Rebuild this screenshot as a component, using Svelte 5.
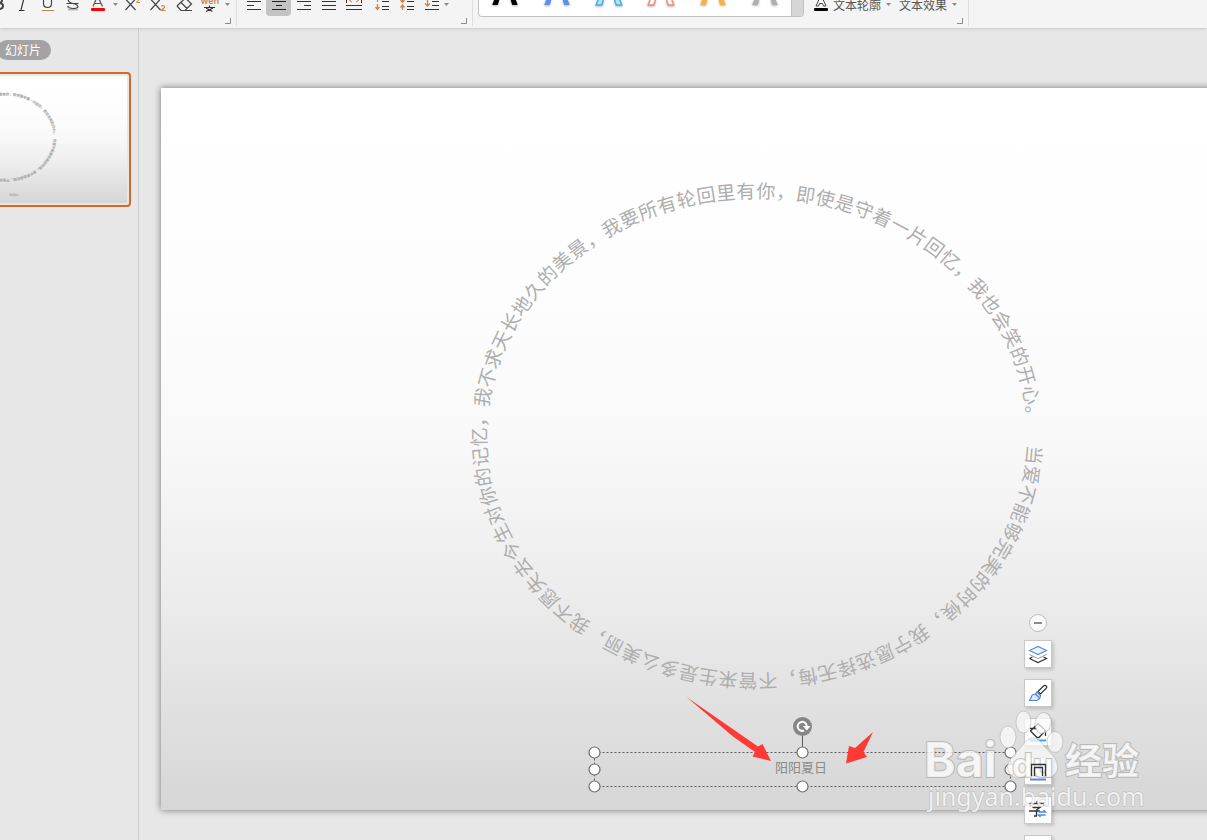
<script>
  const verse =
    '当爱不能够完美的时候，我宁愿选择无悔，不管来生是多么美丽，我不愿失去今生对你的记忆，我不求天长地久的美景，我要所有轮回里有你，即使是守着一片回忆，我也会笑的开心。';

  // Glyph centres walk clockwise round an ellipse at equal arc steps.
  function layoutOnEllipse(text, { cx, cy, rx, ry, size, step, start }) {
    const xs = [];
    const ys = [];
    const angles = [];
    const delta = 0.0001;
    let t = start;
    for (let i = 0; i < text.length; i++) {
      const px = cx + rx * Math.cos(t);
      const py = cy + ry * Math.sin(t);
      const a = Math.atan2(ry * Math.cos(t), -rx * Math.sin(t));
      const back = size / 2;
      const down = size * 0.38;
      xs.push((px - back * Math.cos(a) - down * Math.sin(a)).toFixed(2));
      ys.push((py - back * Math.sin(a) + down * Math.cos(a)).toFixed(2));
      angles.push(((a * 180) / Math.PI).toFixed(2));
      let run = 0;
      while (run < step) {
        run += Math.hypot(rx * Math.sin(t), ry * Math.cos(t)) * delta;
        t += delta;
      }
    }
    return { x: xs.join(' '), y: ys.join(' '), rotate: angles.join(' ') };
  }

  const ring = layoutOnEllipse(verse, {
    cx: 596, cy: 348, rx: 278, ry: 245, size: 19, step: 20.04, start: 0.078
  });

  const presets = [
    { fill: '#000000', stroke: 'none' },
    { fill: '#5b92e5', stroke: 'none' },
    { fill: '#b5e2f5', stroke: '#45b1e1' },
    { fill: '#ffffff', stroke: '#ef8f78' },
    { fill: '#f6b04e', stroke: 'none' },
    { fill: '#b0b0b0', stroke: 'none' }
  ];

  const handles = [
    [433, 664], [641, 664], [849, 664], [433, 681], [849, 681],
    [433, 698], [641, 698], [849, 698]
  ];
</script>

{#snippet caret(label)}
  <button class="caret" aria-label={label}>
    <svg width="7" height="28" viewBox="0 0 7 28"><path d="M1 3h5L3.500 6z" fill="#8a8a8a" /></svg>
  </button>
{/snippet}

{#snippet corner(label)}
  <button class="corner" aria-label={label}>
    <svg width="6" height="6" viewBox="0 0 6 6"><path d="M5.500 0v5.500H0" fill="none" stroke="#8a8a8a" /></svg>
  </button>
{/snippet}

{#snippet slideText()}
  <text class="ring" x={ring.x} y={ring.y} rotate={ring.rotate}>{verse}</text>
  <text class="name" x="640" y="684" text-anchor="middle">阳阳夏日</text>
{/snippet}

<div class="app">
  <header class="ribbon">
    <section class="group font-group">
      <button class="tool cut" aria-label="加粗">
        <svg width="10" height="28" viewBox="0 0 10 28"><path d="M-4-3H0Q3-3 3 0T0 3M-4 3H0Q4 3 4 6T0 9H-4" transform="translate(-1 0)" fill="none" stroke="#444" stroke-width="2" /></svg>
      </button>
      <button class="tool" aria-label="倾斜">
        <svg width="25" height="28" viewBox="0 0 25 28"><path d="M14.500-4L11 10M9 10.500h5.500" fill="none" stroke="#333" stroke-width="1.200" /></svg>
      </button>
      <button class="tool" aria-label="下划线">
        <svg width="25" height="28" viewBox="0 0 25 28"><path d="M8.500-4V3.500Q8.500 7.500 12.500 7.500T16.500 3.500V-4" fill="none" stroke="#444" stroke-width="1.200" /><path d="M7 10.500h12" stroke="#cf8151" /></svg>
      </button>
      <button class="tool" aria-label="删除线">
        <svg width="25" height="28" viewBox="0 0 25 28"><path d="M8 9.500h10" stroke="#b8b8b8" stroke-width="2" /><path d="M16.500-1Q15-4 12-4Q8-4 8-1Q8 2.500 13 3.500Q18 4.500 18 7Q17 8.500 13 8.500Q9 8.500 7.500 6M6.500 3.500h12" fill="none" stroke="#444" stroke-width="1.200" /></svg>
      </button>
      <button class="tool" aria-label="字体颜色">
        <svg width="25" height="28" viewBox="0 0 25 28"><path d="M8 6.500L12.500-4L17.500 6.500M9 3.500h7" fill="none" stroke="#555" stroke-width="1.200" /><rect x="6" y="8" width="14" height="3" rx="1" fill="#f00" /></svg>
      </button>
      {@render caret('更多字体颜色')}
      <button class="tool" aria-label="上标">
        <svg width="25" height="28" viewBox="0 0 25 28"><path d="M5.500-1L15.500 10M15.500-1L5.500 10" fill="none" stroke="#444" stroke-width="1.200" /><path d="M16.500-1Q19.500-3 19.500-1L16.500 2.500H20" fill="none" stroke="#cf8151" /></svg>
      </button>
      <button class="tool" aria-label="下标">
        <svg width="25" height="28" viewBox="0 0 25 28"><path d="M5.500-1L15.500 10M15.500-1L5.500 10" fill="none" stroke="#444" stroke-width="1.200" /><path d="M16.500 6.500Q17 5.500 18 5.500Q20.500 6 19 8L16.500 10.500H20.500" fill="none" stroke="#cf8151" stroke-width="1.200" /></svg>
      </button>
      <button class="tool wide" aria-label="清除格式">
        <svg width="27" height="28" viewBox="0 0 27 28"><path d="M15.500-2L21.500 4L15 10.500H11L7.500 6.500Q7 6 7.500 5.500ZM11 2.500L17 8.500M11 10.500H22" fill="none" stroke="#444" stroke-width="1.200" /></svg>
      </button>
      <button class="tool" aria-label="拼音指南">
        <svg width="25" height="28" viewBox="0 0 25 28"><text class="pinyin" x="13" y="4" text-anchor="middle">wen</text><path d="M7 7.500H18M12.500 5.500v2M9 8L15.500 11.500M16 8L9 11.500" fill="none" stroke="#333" stroke-width="1.200" /></svg>
      </button>
      {@render caret('更多拼音')}
      {@render corner('字体设置')}
    </section>

    <section class="group para-group">
      <button class="tool" aria-label="左对齐">
        <svg width="25" height="28" viewBox="0 0 25 28"><path d="M6 1.500H20M6 5.500H13M6 9.500H20" stroke="#333" /></svg>
      </button>
      <button class="tool active" aria-label="居中对齐">
        <svg width="25" height="28" viewBox="0 0 25 28"><path d="M6 1.500H20M10 5.500H16M6 9.500H20" stroke="#222" /></svg>
      </button>
      <button class="tool" aria-label="右对齐">
        <svg width="25" height="28" viewBox="0 0 25 28"><path d="M6 1.500H20M13 5.500H20M6 9.500H20" stroke="#333" /></svg>
      </button>
      <button class="tool" aria-label="两端对齐">
        <svg width="25" height="28" viewBox="0 0 25 28"><path d="M6 1.500H20M6 5.500H20M6 9.500H20" stroke="#333" /></svg>
      </button>
      <button class="tool" aria-label="分散对齐">
        <svg width="25" height="28" viewBox="0 0 25 28"><path d="M5.500-3V3M20.500-3V3M5 5.500H21M5 9.500H21" fill="none" stroke="#333" /><path d="M11-1L8.500 .5L11 2M15-1L17.500 .5L15 2" fill="none" stroke="#cf8151" /></svg>
      </button>
      <button class="tool spaced" aria-label="行距">
        <svg width="25" height="28" viewBox="0 0 25 28"><path d="M13 1.500H20M13 6.500H20M13 9.500H20" stroke="#333" /><path d="M8.500-2V2M8.500 4V9M6.500 7L8.500 9.500L10.500 7" fill="none" stroke="#cf8151" stroke-width="1.300" /></svg>
      </button>
      <button class="tool" aria-label="段落间距">
        <svg width="25" height="28" viewBox="0 0 25 28"><path d="M13 1.500H20M13 6.500H20M13 9.500H20" stroke="#333" /><path d="M8.500-2V2M6.500 0L8.500 2.500L10.500 0M8.500 10V5M6.500 7.500L8.500 5L10.500 7.500" fill="none" stroke="#cf8151" stroke-width="1.300" /></svg>
      </button>
      <button class="tool narrow" aria-label="行间距">
        <svg width="22" height="28" viewBox="0 0 22 28"><path d="M13 1.500H20M13 5.500H20M6 9.500H20" stroke="#333" /><path d="M8.500-3V6M6 3.500L8.500 6L11 3.500" fill="none" stroke="#cf8151" stroke-width="1.300" /></svg>
      </button>
      {@render caret('更多行距')}
      {@render corner('段落设置')}
    </section>

    <section class="group art-group">
      <div class="gallery">
        {#each presets as preset, i}
          <button class="preset" aria-label={'艺术字样式' + (i + 1)}>
            <svg width="52" height="16" viewBox="0 0 52 16">
              <text class="glyph" x="26" y="5" text-anchor="middle" fill={preset.fill} stroke={preset.stroke}>A</text>
            </svg>
          </button>
        {/each}
        <button class="more" aria-label="更多样式"></button>
      </div>
      <button class="labelled outline">
        <svg width="16" height="28" viewBox="0 0 16 28"><path d="M3 6L8-5L13 6H10.500L9.500 3.500H6.500L5.500 6Z" fill="#fff" stroke="#444" /><rect x="1" y="8" width="14" height="3" rx="1" fill="#000" /></svg>
        <span>文本轮廓</span>
      </button>
      {@render caret('更多轮廓')}
      <button class="labelled effect"><span>文本效果</span></button>
      {@render caret('更多效果')}
      {@render corner('文本设置')}
    </section>
  </header>

  <div class="body">
    <aside class="panel">
      <button class="tab">幻灯片</button>
      <button class="thumb" aria-label="幻灯片 1">
        <svg class="mini" width="226" height="127" viewBox="0 0 1283 722" aria-hidden="true">
          {@render slideText()}
        </svg>
      </button>
    </aside>

    <main class="stage">
      <article class="slide">
        <svg class="art" width="1283" height="722" viewBox="0 0 1283 722">
          {@render slideText()}
          <rect x="433.500" y="664.500" width="416" height="34" fill="none" stroke="#5a5a5a" stroke-dasharray="2 2" />
          <path d="M641.500 646v13" stroke="#5a5a5a" />
          <circle cx="641.500" cy="638.500" r="9.500" fill="#868686" />
          <path d="M643 642.500A4.500 4.500 0 1 1 645.700 638" fill="none" stroke="#fff" stroke-width="2" />
          <path d="M642 638h7.500l-3.700 4.500z" fill="#fff" />
          {#each handles as [x, y]}
            <circle cx={x + 0.5} cy={y + 0.5} r="5.500" fill="#fff" stroke="#6e6e6e" stroke-width="1.200" />
          {/each}
          <path d="M525.500 609L597 658.500L601.500 656L610 673L591.500 668.500L594 664L572 648.500Z" fill="#ff3a36" />
          <path d="M712 644L687.500 657.500L685 675.500L706 669L700.500 666Z" fill="none" />
          <path d="M712 644L694 660L688 658L685 675.500L706 669L702.500 664Z" fill="#ff3a36" />
        </svg>

        <nav class="float">
          <button class="collapse" aria-label="收起"></button>
          <button class="quick" aria-label="图层">
            <svg width="26" height="26" viewBox="0 0 26 26"><path d="M4.500 17.500L13 21.500L21.500 17.500L18.500 16M7.500 16L4.500 17.500" fill="none" stroke="#333" stroke-width="1.200" /><path d="M4.500 13.500L13 17.500L21.500 13.500" fill="none" stroke="#999" /><path d="M4.500 9.500L13 5.500L21.500 9.500L13 13.500Z" fill="#edf3fc" stroke="#5b8edb" stroke-width="1.200" /></svg>
          </button>
          <button class="quick" aria-label="画笔">
            <svg width="26" height="26" viewBox="0 0 26 26"><path d="M13 11.500L18.500 6Q20 4.700 21.200 6T21 8.500L15.500 14Z" fill="#fff" stroke="#333" stroke-width="1.200" /><path d="M12 12L15.500 15.500Q15 20.500 10 20.500H4.500Q5.500 19 6 17.500Q7 14 10.500 14ZM10.500 14L14 17.500" fill="#dce9fc" stroke="#4d82d6" stroke-width="1.200" /></svg>
          </button>
          <button class="quick" aria-label="填充">
            <svg width="26" height="26" viewBox="0 0 26 26"><path d="M13 4.500L20.500 11.500L14 18.500H12L5.500 12L13 4.500M5 9.500H12M20.500 11V17" fill="none" stroke="#333" stroke-width="1.300" /><path d="M5 21.500H21" stroke="#35a8dd" stroke-width="2" /></svg>
          </button>
          <button class="quick" aria-label="边框"></button>
          <button class="quick" aria-label="替换文字">
            <svg width="26" height="26" viewBox="0 0 26 26"><path d="M12 4V6.500M5 9V6.500H18.500V9M7.500 10.500H15L11.500 13V19H9M4 14H15" fill="none" stroke="#333" stroke-width="1.300" /><path d="M13.500 15H20.500L18.500 13M20.500 18H13.500L15.500 20" fill="none" stroke="#4d82d6" stroke-width="1.300" /></svg>
          </button>
          <button class="quick" aria-label="更多"></button>
        </nav>

        <svg class="mark" width="230" height="130" viewBox="0 0 230 130">
          <g class="ink">
            <ellipse cx="84" cy="37" rx="8" ry="11" />
            <ellipse cx="99.500" cy="22" rx="7.500" ry="11" />
            <ellipse cx="119" cy="23" rx="8" ry="10.500" transform="rotate(12 119 23)" />
            <ellipse cx="131" cy="42" rx="8" ry="10.500" />
            <path d="M109 38Q115 38 120 46L130 57Q137 67 131 74Q127 79 118 77Q109 75 100 77Q90 80 85 73Q81 65 88 57L98 46Q103 38 109 38Z" />
          </g>
          <text class="brand" x="0" y="77">Bai</text>
          <text class="brand du" x="88" y="77">du</text>
          <path d="M107.500 76V64.500H121.500V76M110.500 76V67.500H118.500V76" fill="none" stroke="#333" stroke-width="1.300" />
          <path d="M106 79.500H122" stroke="#5b86d0" stroke-width="2" />
          <text class="exp" x="141" y="75">经验</text>
          <text class="site" x="4" y="106">jingyan.baidu.com</text>
        </svg>
      </article>
    </main>
  </div>
</div>

<style>
  :global(body) {
    margin: 0;
    overflow: hidden;
  }

  .app {
    display: flex;
    flex-direction: column;
    height: 100vh;
    overflow: hidden;
    background: #e7e7e7;
    font-family: "Noto Sans CJK SC", sans-serif;
    font-size: 12px;
    color: #555;
  }

  button {
    padding: 0;
    border: 0;
    background: none;
    font: inherit;
    color: inherit;
  }

  svg {
    display: block;
  }

  .ribbon {
    position: relative;
    display: flex;
    flex: none;
    height: 28px;
    background: #f4f4f4;
    box-shadow: 0 0 4px rgba(0, 0, 0, 0.2);
  }

  .group {
    position: relative;
    display: flex;
    box-sizing: border-box;
    height: 26px;
    border-right: 1px solid #dedede;
  }

  .font-group {
    width: 237px;
  }

  .para-group {
    width: 236px;
    padding-left: 4px;
  }

  .art-group {
    width: 496px;
    padding-left: 5px;
  }

  .tool {
    flex: none;
    width: 25px;
    height: 28px;
  }

  .cut {
    width: 10px;
  }

  .wide {
    width: 27px;
  }

  .narrow {
    width: 22px;
  }

  .spaced {
    margin-left: 3px;
  }

  .active {
    height: 16px;
    border-radius: 0 0 4px 4px;
    background: #c3c3c3;
    overflow: hidden;
  }

  .active svg {
    margin-bottom: -12px;
  }

  .caret {
    display: flex;
    flex: none;
    justify-content: center;
    width: 10px;
    height: 28px;
  }

  .art-group .caret {
    width: 14px;
  }

  .corner {
    position: absolute;
    right: 5px;
    bottom: 2px;
  }

  .pinyin {
    font-family: "Noto Sans", sans-serif;
    font-size: 9px;
    font-weight: 600;
    fill: #cf8151;
  }

  .gallery {
    display: flex;
    flex: none;
    box-sizing: border-box;
    width: 326px;
    height: 17px;
    border: 1px solid #c2c2c2;
    border-top: 0;
    border-radius: 0 0 4px 4px;
    background: #fff;
    overflow: hidden;
  }

  .preset {
    flex: none;
    width: 52px;
  }

  .preset svg {
    filter: drop-shadow(0 1px 1px rgba(0, 0, 0, 0.3));
  }

  .glyph {
    font-family: "Liberation Sans", sans-serif;
    font-size: 38px;
    font-weight: 700;
    stroke-width: 1.500px;
  }

  .more {
    flex: 1;
    border-left: 1px solid #c2c2c2;
    background: #d6d6d6;
  }

  .labelled {
    display: flex;
    flex: none;
    gap: 4px;
    height: 28px;
    line-height: 12px;
    white-space: nowrap;
  }

  .labelled span {
    margin-top: -1px;
  }

  .outline {
    margin-left: 9px;
  }

  .effect {
    margin-left: 4px;
  }

  .body {
    display: flex;
    flex: 1;
    min-height: 0;
  }

  .panel {
    flex: none;
    width: 138px;
    padding-top: 12px;
    border-right: 1px solid #d0d0d0;
    overflow: hidden;
  }

  .tab {
    display: block;
    width: 54px;
    height: 20px;
    margin-left: -3px;
    padding-right: 2px;
    border-radius: 10px;
    background: #a3a3a3;
    color: #fff;
    line-height: 18px;
  }

  .thumb {
    display: block;
    margin: 12px 0 0 -103px;
    padding: 2px;
    border: 2px solid #d46a2a;
    border-radius: 4px;
  }

  .mini,
  .slide {
    background: linear-gradient(#ffffff 0%, #fdfdfd 30%, #f8f8f8 50%, #ebebeb 72%, #d6d6d6 100%);
  }

  .mini .ring {
    stroke: #a9a9a9;
  }

  .stage {
    flex: 1;
    min-width: 0;
    padding: 60px 0 0 22px;
    overflow: hidden;
  }

  .slide {
    position: relative;
    width: 1283px;
    height: 722px;
    box-shadow: 0 0 7px rgba(0, 0, 0, 0.5);
  }

  .ring {
    font-size: 19px;
    fill: #aeaeae;
  }

  .name {
    font-size: 13px;
    fill: #8b8b8b;
  }

  .float {
    position: absolute;
    top: 526px;
    left: 863px;
    display: flex;
    flex-direction: column;
    gap: 11px;
    align-items: center;
  }

  .collapse {
    display: grid;
    place-items: center;
    box-sizing: border-box;
    width: 18px;
    height: 18px;
    margin-bottom: -3px;
    border: 1px solid #bdbdbd;
    border-radius: 50%;
    background: #fafafa;
  }

  .collapse::before {
    content: "";
    width: 8px;
    height: 2px;
    background: #8c8c8c;
  }

  .quick {
    box-sizing: border-box;
    width: 28px;
    height: 28px;
    border: 1px solid #c8c8c8;
    background: #fff;
    box-shadow: 2px 2px 3px rgba(0, 0, 0, 0.15);
  }

  .mark {
    position: absolute;
    top: 612px;
    left: 763px;
    pointer-events: none;
  }

  .ink {
    fill: rgba(250, 250, 250, 0.75);
    stroke: rgba(150, 150, 150, 0.4);
  }

  .brand,
  .exp,
  .site {
    fill: rgba(255, 255, 255, 0.75);
    stroke: rgba(150, 150, 150, 0.5);
    stroke-width: 2px;
    paint-order: stroke;
  }

  .brand {
    font-family: Inter, sans-serif;
    font-size: 48px;
    font-weight: 700;
  }

  .du {
    font-size: 33px;
  }

  .exp {
    font-size: 37px;
    font-weight: 700;
  }

  .site {
    font-family: "Noto Sans", sans-serif;
    font-size: 25px;
    stroke-width: 1px;
  }
</style>
